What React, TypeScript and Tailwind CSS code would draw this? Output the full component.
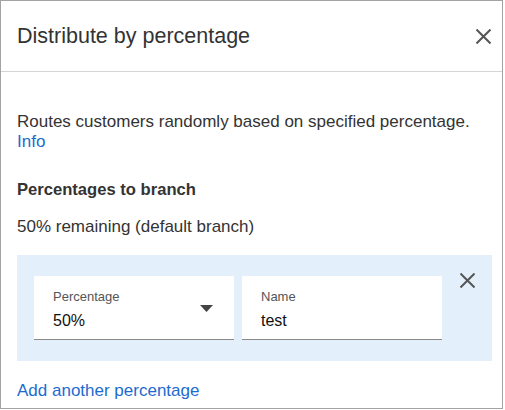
function CloseIcon({ className }: { className?: string }) {
  return (
    <svg width="15" height="15" viewBox="0 0 15 15" className={className}>
      <path d="M0.5 0.5L14.5 14.5M14.5 0.5L0.5 14.5" stroke="#555" strokeWidth="2" />
    </svg>
  )
}

export default function App() {
  return (
    <div className="w-[505px] h-[410px] bg-white" style={{ fontFamily: '"Liberation Sans", Arial, sans-serif' }}>
      <div className="w-[503px] h-[409px] border border-[#a3a3a3] flex flex-col text-[#333]">
        {/* Header */}
        <div className="h-[71px] shrink-0 border-b border-[#d5d5d5] flex items-center justify-between pl-[16px] pr-[11px]">
          <h1 className="text-[21.5px] leading-6 text-[#333] pb-[1px]">Distribute by percentage</h1>
          <CloseIcon />
        </div>

        {/* Body */}
        <div className="pt-[40px] pl-[16px] pr-[10px]">
          <p className="text-[17px] leading-5">
            Routes customers randomly based on specified percentage.
            <br />
            <span className="text-[#1d6bcf]">Info</span>
          </p>

          <h2 className="mt-[28px] text-[16.6px] leading-5 font-bold">Percentages to branch</h2>
          <p className="mt-[17px] text-[17px] leading-5">50% remaining (default branch)</p>

          {/* Branch row */}
          <div className="mt-[18px] w-[475px] h-[106px] bg-[#e3f0fc] flex items-start pl-[17px] pt-[21px]">
            <div className="w-[200px] h-[64px] bg-white border-b border-[#8a8a8a] flex items-start justify-between pl-[19px] pr-[21px] pt-[13px]">
              <div className="flex flex-col">
                <span className="text-[13px] leading-4 text-[#555]">Percentage</span>
                <span className="mt-[6px] text-[16px] leading-5 text-[#111]">50%</span>
              </div>
              <svg width="13" height="7" viewBox="0 0 13 7" className="mt-[16px]">
                <path d="M0 0h13L6.5 7z" fill="#444" />
              </svg>
            </div>
            <div className="ml-[8px] w-[200px] h-[64px] bg-white border-b border-[#8a8a8a] flex flex-col pl-[19px] pt-[13px]">
              <span className="text-[13px] leading-4 text-[#555]">Name</span>
              <span className="mt-[6px] text-[16px] leading-5 text-[#111]">test</span>
            </div>
            <CloseIcon className="ml-[18px] -mt-[3px]" />
          </div>

          <p className="mt-[20px] text-[17px] leading-5 text-[#1d6bcf]">Add another percentage</p>
        </div>
      </div>
    </div>
  )
}
